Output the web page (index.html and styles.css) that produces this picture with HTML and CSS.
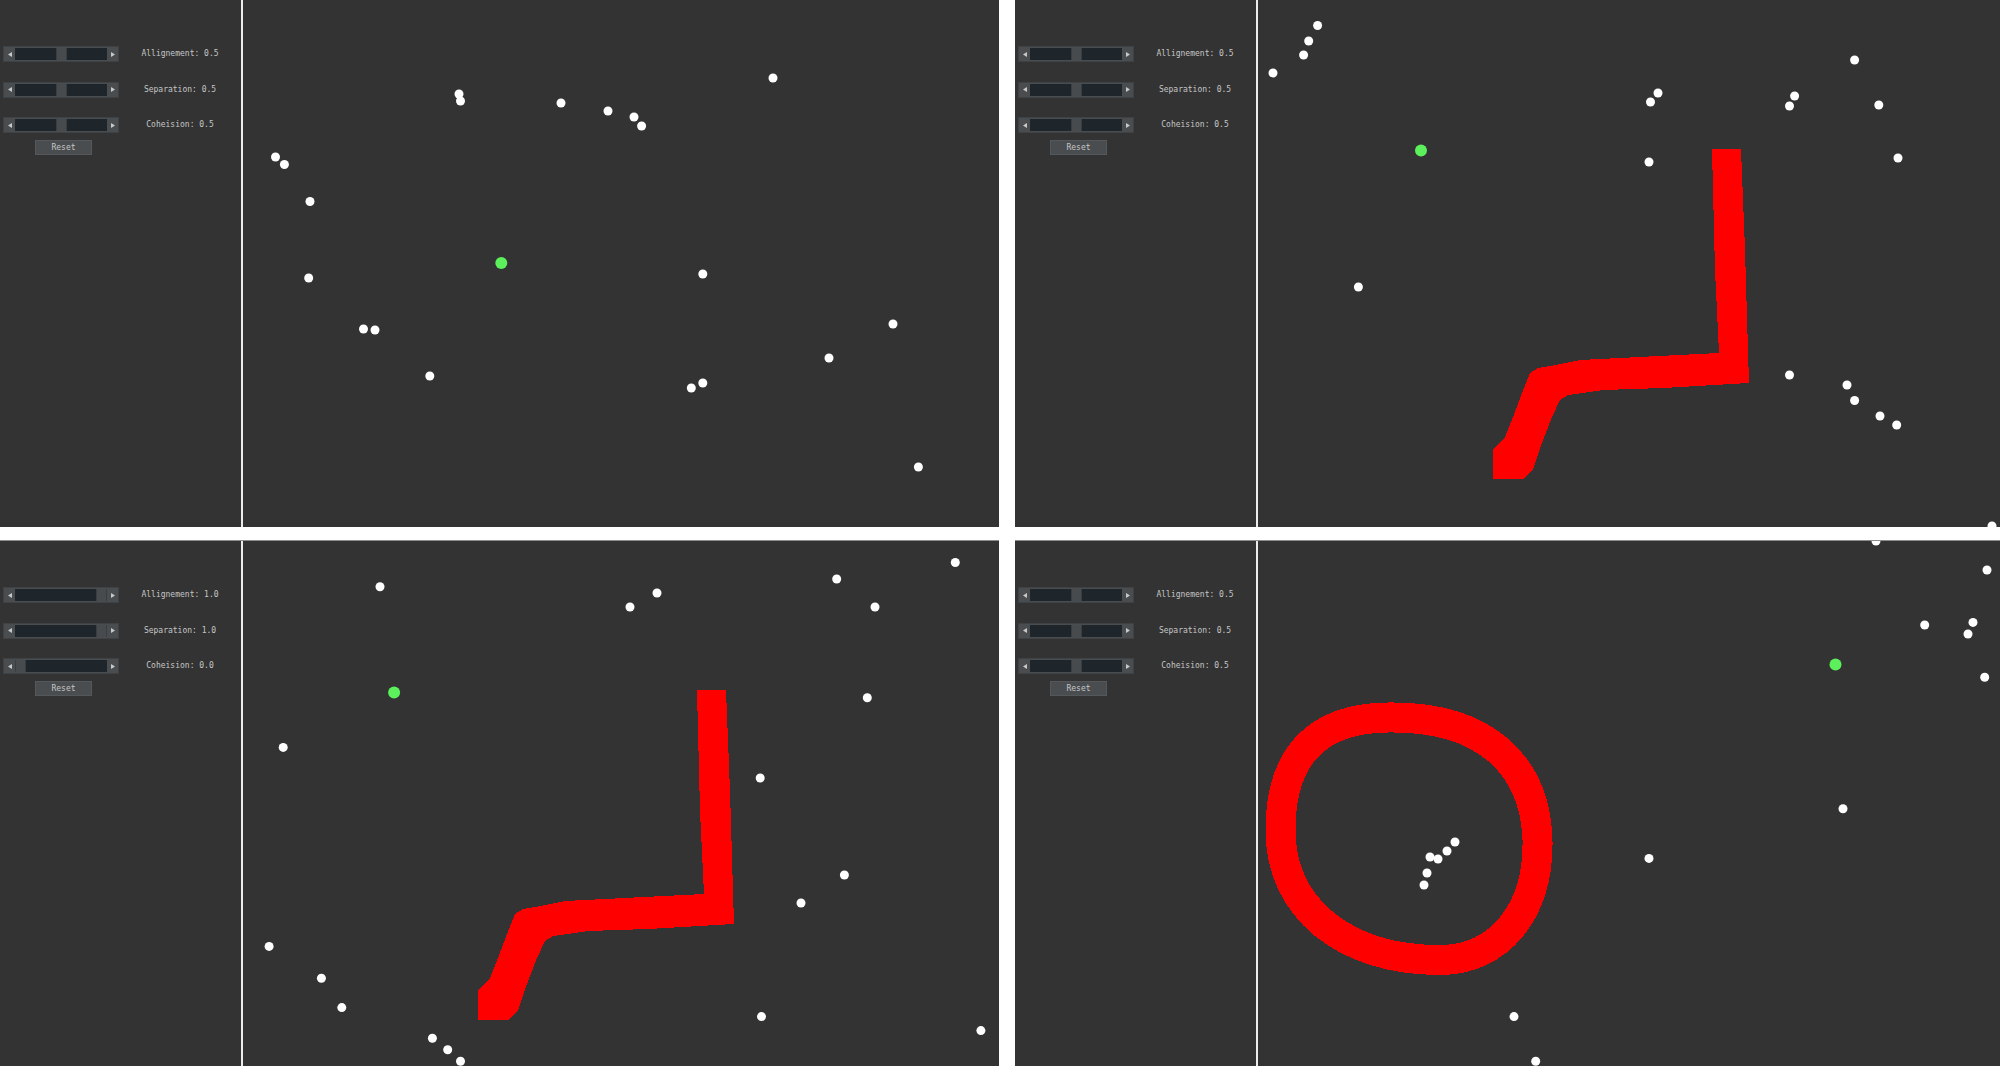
FILE: index.html
```html
<!DOCTYPE html>
<html>
<head>
<meta charset="utf-8">
<title>Boids</title>
<link rel="stylesheet" href="styles.css">
</head>
<body>
<div class="grid">

  <section class="sim">
    <div class="panel">
      <div class="rows">
        <div class="row">
          <div class="slider">
            <span class="arrow"><svg width="4" height="5" viewBox="0 0 4 5"><polygon points="0,2.5 4,0 4,5"/></svg></span>
            <div class="track"><i class="fill" style="flex-grow:0.5"></i><i class="thumb"></i><i class="fill" style="flex-grow:0.5"></i></div>
            <span class="arrow"><svg width="4" height="5" viewBox="0 0 4 5"><polygon points="4,2.5 0,0 0,5"/></svg></span>
          </div>
          <span class="label">Allignement: 0.5</span>
        </div>
        <div class="row">
          <div class="slider">
            <span class="arrow"><svg width="4" height="5" viewBox="0 0 4 5"><polygon points="0,2.5 4,0 4,5"/></svg></span>
            <div class="track"><i class="fill" style="flex-grow:0.5"></i><i class="thumb"></i><i class="fill" style="flex-grow:0.5"></i></div>
            <span class="arrow"><svg width="4" height="5" viewBox="0 0 4 5"><polygon points="4,2.5 0,0 0,5"/></svg></span>
          </div>
          <span class="label">Separation: 0.5</span>
        </div>
        <div class="row">
          <div class="slider">
            <span class="arrow"><svg width="4" height="5" viewBox="0 0 4 5"><polygon points="0,2.5 4,0 4,5"/></svg></span>
            <div class="track"><i class="fill" style="flex-grow:0.5"></i><i class="thumb"></i><i class="fill" style="flex-grow:0.5"></i></div>
            <span class="arrow"><svg width="4" height="5" viewBox="0 0 4 5"><polygon points="4,2.5 0,0 0,5"/></svg></span>
          </div>
          <span class="label">Coheision: 0.5</span>
        </div>
      </div>
      <div class="reset">Reset</div>
    </div>
    <div class="world">
      <svg class="field" width="760" height="530">
        <g class="boids">
          <circle cx="216" cy="94" r="4.5"/><circle cx="217.5" cy="101" r="4.5"/><circle cx="318" cy="103" r="4.5"/>
          <circle cx="365" cy="111" r="4.5"/><circle cx="391" cy="117" r="4.5"/><circle cx="398.6" cy="126" r="4.5"/>
          <circle cx="530" cy="78" r="4.5"/><circle cx="32.5" cy="157" r="4.5"/><circle cx="41.4" cy="164.5" r="4.5"/>
          <circle cx="67" cy="201.5" r="4.5"/><circle cx="65.7" cy="278" r="4.5"/><circle cx="120.5" cy="329" r="4.5"/>
          <circle cx="132" cy="330" r="4.5"/><circle cx="186.8" cy="376" r="4.5"/><circle cx="459.8" cy="274" r="4.5"/>
          <circle cx="448.3" cy="388" r="4.5"/><circle cx="459.8" cy="383" r="4.5"/><circle cx="586" cy="358" r="4.5"/>
          <circle cx="650" cy="324" r="4.5"/><circle cx="675.4" cy="467" r="4.5"/>
        </g>
        <circle class="leader" cx="258.3" cy="263" r="6"/>
      </svg>
    </div>
  </section>

  <section class="sim">
    <div class="panel">
      <div class="rows">
        <div class="row">
          <div class="slider">
            <span class="arrow"><svg width="4" height="5" viewBox="0 0 4 5"><polygon points="0,2.5 4,0 4,5"/></svg></span>
            <div class="track"><i class="fill" style="flex-grow:0.5"></i><i class="thumb"></i><i class="fill" style="flex-grow:0.5"></i></div>
            <span class="arrow"><svg width="4" height="5" viewBox="0 0 4 5"><polygon points="4,2.5 0,0 0,5"/></svg></span>
          </div>
          <span class="label">Allignement: 0.5</span>
        </div>
        <div class="row">
          <div class="slider">
            <span class="arrow"><svg width="4" height="5" viewBox="0 0 4 5"><polygon points="0,2.5 4,0 4,5"/></svg></span>
            <div class="track"><i class="fill" style="flex-grow:0.5"></i><i class="thumb"></i><i class="fill" style="flex-grow:0.5"></i></div>
            <span class="arrow"><svg width="4" height="5" viewBox="0 0 4 5"><polygon points="4,2.5 0,0 0,5"/></svg></span>
          </div>
          <span class="label">Separation: 0.5</span>
        </div>
        <div class="row">
          <div class="slider">
            <span class="arrow"><svg width="4" height="5" viewBox="0 0 4 5"><polygon points="0,2.5 4,0 4,5"/></svg></span>
            <div class="track"><i class="fill" style="flex-grow:0.5"></i><i class="thumb"></i><i class="fill" style="flex-grow:0.5"></i></div>
            <span class="arrow"><svg width="4" height="5" viewBox="0 0 4 5"><polygon points="4,2.5 0,0 0,5"/></svg></span>
          </div>
          <span class="label">Coheision: 0.5</span>
        </div>
      </div>
      <div class="reset">Reset</div>
    </div>
    <div class="world">
      <svg class="field" width="760" height="530">
        <path class="wall" d="M454 149 L483 149 L487 250 L491 383 L405 388 L345 390 L310 395 L302 400 L294 417 L284 443 L275 470 L265 479 L235 479 L235 450 L247 437 L255 417 L264 393 L272 373 L280 368 L292 366 L322 360 L461 353 L457 270 Z"/>
        <g class="boids">
          <circle cx="59.6" cy="25.5" r="4.5"/><circle cx="50.7" cy="41" r="4.5"/><circle cx="45.6" cy="55" r="4.5"/>
          <circle cx="15" cy="73" r="4.5"/><circle cx="400" cy="93" r="4.5"/><circle cx="392.5" cy="102" r="4.5"/>
          <circle cx="536.6" cy="96" r="4.5"/><circle cx="531.5" cy="106" r="4.5"/><circle cx="596.6" cy="60" r="4.5"/>
          <circle cx="620.8" cy="105" r="4.5"/><circle cx="391" cy="162" r="4.5"/><circle cx="640" cy="158" r="4.5"/>
          <circle cx="100.4" cy="287" r="4.5"/><circle cx="531.5" cy="375" r="4.5"/><circle cx="589" cy="385" r="4.5"/>
          <circle cx="596.6" cy="400.5" r="4.5"/><circle cx="622" cy="416" r="4.5"/><circle cx="638.7" cy="425" r="4.5"/>
          <circle cx="734" cy="526" r="4.5"/>
        </g>
        <circle class="leader" cx="163" cy="150.5" r="6"/>
      </svg>
    </div>
  </section>

  <section class="sim lower">
    <div class="panel">
      <div class="rows">
        <div class="row">
          <div class="slider">
            <span class="arrow"><svg width="4" height="5" viewBox="0 0 4 5"><polygon points="0,2.5 4,0 4,5"/></svg></span>
            <div class="track"><i class="fill" style="flex-grow:1"></i><i class="thumb"></i><i class="fill" style="flex-grow:0"></i></div>
            <span class="arrow"><svg width="4" height="5" viewBox="0 0 4 5"><polygon points="4,2.5 0,0 0,5"/></svg></span>
          </div>
          <span class="label">Allignement: 1.0</span>
        </div>
        <div class="row">
          <div class="slider">
            <span class="arrow"><svg width="4" height="5" viewBox="0 0 4 5"><polygon points="0,2.5 4,0 4,5"/></svg></span>
            <div class="track"><i class="fill" style="flex-grow:1"></i><i class="thumb"></i><i class="fill" style="flex-grow:0"></i></div>
            <span class="arrow"><svg width="4" height="5" viewBox="0 0 4 5"><polygon points="4,2.5 0,0 0,5"/></svg></span>
          </div>
          <span class="label">Separation: 1.0</span>
        </div>
        <div class="row">
          <div class="slider">
            <span class="arrow"><svg width="4" height="5" viewBox="0 0 4 5"><polygon points="0,2.5 4,0 4,5"/></svg></span>
            <div class="track"><i class="fill" style="flex-grow:0"></i><i class="thumb"></i><i class="fill" style="flex-grow:1"></i></div>
            <span class="arrow"><svg width="4" height="5" viewBox="0 0 4 5"><polygon points="4,2.5 0,0 0,5"/></svg></span>
          </div>
          <span class="label">Coheision: 0.0</span>
        </div>
      </div>
      <div class="reset">Reset</div>
    </div>
    <div class="world">
      <svg class="field" width="760" height="530">
        <path class="wall" d="M454 149 L483 149 L487 250 L491 383 L405 388 L345 390 L310 395 L302 400 L294 417 L284 443 L275 470 L265 479 L235 479 L235 450 L247 437 L255 417 L264 393 L272 373 L280 368 L292 366 L322 360 L461 353 L457 270 Z"/>
        <g class="boids">
          <circle cx="137" cy="45.7" r="4.5"/><circle cx="387" cy="66" r="4.5"/><circle cx="414" cy="52" r="4.5"/>
          <circle cx="593.7" cy="38" r="4.5"/><circle cx="632" cy="66" r="4.5"/><circle cx="712.3" cy="21.5" r="4.5"/>
          <circle cx="624.3" cy="156.7" r="4.5"/><circle cx="40.2" cy="206.4" r="4.5"/><circle cx="517.2" cy="237" r="4.5"/>
          <circle cx="601.4" cy="334" r="4.5"/><circle cx="558" cy="362" r="4.5"/><circle cx="26.1" cy="405.4" r="4.5"/>
          <circle cx="78.4" cy="437.3" r="4.5"/><circle cx="98.8" cy="466.6" r="4.5"/><circle cx="518.5" cy="475.6" r="4.5"/>
          <circle cx="189.4" cy="497.3" r="4.5"/><circle cx="204.7" cy="508.7" r="4.5"/><circle cx="217.5" cy="520.2" r="4.5"/>
          <circle cx="737.9" cy="489.6" r="4.5"/>
        </g>
        <circle class="leader" cx="151.1" cy="151.6" r="6"/>
      </svg>
    </div>
  </section>

  <section class="sim lower">
    <div class="panel">
      <div class="rows">
        <div class="row">
          <div class="slider">
            <span class="arrow"><svg width="4" height="5" viewBox="0 0 4 5"><polygon points="0,2.5 4,0 4,5"/></svg></span>
            <div class="track"><i class="fill" style="flex-grow:0.5"></i><i class="thumb"></i><i class="fill" style="flex-grow:0.5"></i></div>
            <span class="arrow"><svg width="4" height="5" viewBox="0 0 4 5"><polygon points="4,2.5 0,0 0,5"/></svg></span>
          </div>
          <span class="label">Allignement: 0.5</span>
        </div>
        <div class="row">
          <div class="slider">
            <span class="arrow"><svg width="4" height="5" viewBox="0 0 4 5"><polygon points="0,2.5 4,0 4,5"/></svg></span>
            <div class="track"><i class="fill" style="flex-grow:0.5"></i><i class="thumb"></i><i class="fill" style="flex-grow:0.5"></i></div>
            <span class="arrow"><svg width="4" height="5" viewBox="0 0 4 5"><polygon points="4,2.5 0,0 0,5"/></svg></span>
          </div>
          <span class="label">Separation: 0.5</span>
        </div>
        <div class="row">
          <div class="slider">
            <span class="arrow"><svg width="4" height="5" viewBox="0 0 4 5"><polygon points="0,2.5 4,0 4,5"/></svg></span>
            <div class="track"><i class="fill" style="flex-grow:0.5"></i><i class="thumb"></i><i class="fill" style="flex-grow:0.5"></i></div>
            <span class="arrow"><svg width="4" height="5" viewBox="0 0 4 5"><polygon points="4,2.5 0,0 0,5"/></svg></span>
          </div>
          <span class="label">Coheision: 0.5</span>
        </div>
      </div>
      <div class="reset">Reset</div>
    </div>
    <div class="world">
      <svg class="field" width="760" height="530">
        <path class="ring" d="M130 176.5 C225 175 277 222 279.5 299 C281 371 240.5 419 182 419 C86.3 419 22.5 367 22.5 289 C22.5 212 62 177 130 176.5 Z"/>
        <g class="boids">
          <circle cx="618" cy="0" r="4.5"/><circle cx="729" cy="29" r="4.5"/><circle cx="666.7" cy="84" r="4.5"/>
          <circle cx="715" cy="81.4" r="4.5"/><circle cx="710" cy="93" r="4.5"/><circle cx="726.7" cy="136.3" r="4.5"/>
          <circle cx="585" cy="267.7" r="4.5"/><circle cx="391" cy="317.4" r="4.5"/><circle cx="256" cy="475.6" r="4.5"/>
          <circle cx="277.7" cy="520.2" r="4.5"/>
          <circle cx="197" cy="301" r="4.5"/><circle cx="189" cy="310" r="4.5"/><circle cx="172" cy="316" r="4.5"/>
          <circle cx="180" cy="318" r="4.5"/><circle cx="169" cy="332" r="4.5"/><circle cx="166" cy="344" r="4.5"/>
        </g>
        <circle class="leader" cx="577.5" cy="123.5" r="6"/>
      </svg>
    </div>
  </section>

</div>
</body>
</html>
```

FILE: styles.css
```css
html, body {
  margin: 0;
  padding: 0;
  background: #ffffff;
  overflow: hidden;
}

.grid {
  display: grid;
  grid-template-columns: 999px 985px;
  grid-template-rows: 527px 526px;
  column-gap: 16px;
  row-gap: 13px;
  width: 2000px;
  height: 1066px;
}

.sim {
  display: flex;
  background: #333333;
  overflow: hidden;
}

.sim.lower {
  border-top: 1px solid #8c8c8c;
}

.panel {
  width: 241px;
  flex: none;
  padding-top: 46px;
  box-sizing: border-box;
  display: flex;
  flex-direction: column;
  font-family: "DejaVu Sans Mono", "Liberation Mono", monospace;
  font-size: 8px;
  color: #c6c6c6;
}

.rows {
  display: flex;
  flex-direction: column;
  gap: 19.5px;
}

.row {
  display: flex;
  align-items: center;
  height: 16px;
}

.slider {
  width: 116px;
  height: 16px;
  margin-left: 3px;
  display: flex;
  background: #4a4d50;
  box-sizing: border-box;
  border: 1px solid #3f4245;
}

.arrow {
  width: 11px;
  flex: none;
  display: flex;
  align-items: center;
  justify-content: center;
}

.arrow svg {
  display: block;
  fill: #c8c8c8;
}

.track {
  flex: 1;
  display: flex;
  margin: 1px 0;
  background: #1e252b;
}

.fill {
  display: block;
  flex-basis: 0;
  flex-shrink: 1;
}

.thumb {
  display: block;
  width: 11px;
  flex: none;
  background: #484b4e;
  box-sizing: border-box;
  border-left: 1px solid #3b3e41;
  border-right: 1px solid #3b3e41;
}

.label {
  flex: 1;
  text-align: center;
  line-height: 16px;
  white-space: nowrap;
}

.reset {
  width: 57px;
  height: 15px;
  margin-top: 7px;
  margin-left: 35px;
  box-sizing: border-box;
  background: #4a4d50;
  border: 1px solid #55585b;
  text-align: center;
  line-height: 13px;
}

.world {
  flex: 1;
  border-left: 2px solid #ececec;
  overflow: hidden;
  background: #333333;
}

.field {
  display: block;
}

.boids circle {
  fill: #ffffff;
}

.leader {
  fill: #5cf05c;
}

.wall {
  fill: #ff0000;
  shape-rendering: crispEdges;
}

.ring {
  fill: none;
  stroke: #ff0000;
  stroke-width: 30;
  shape-rendering: crispEdges;
}
```
